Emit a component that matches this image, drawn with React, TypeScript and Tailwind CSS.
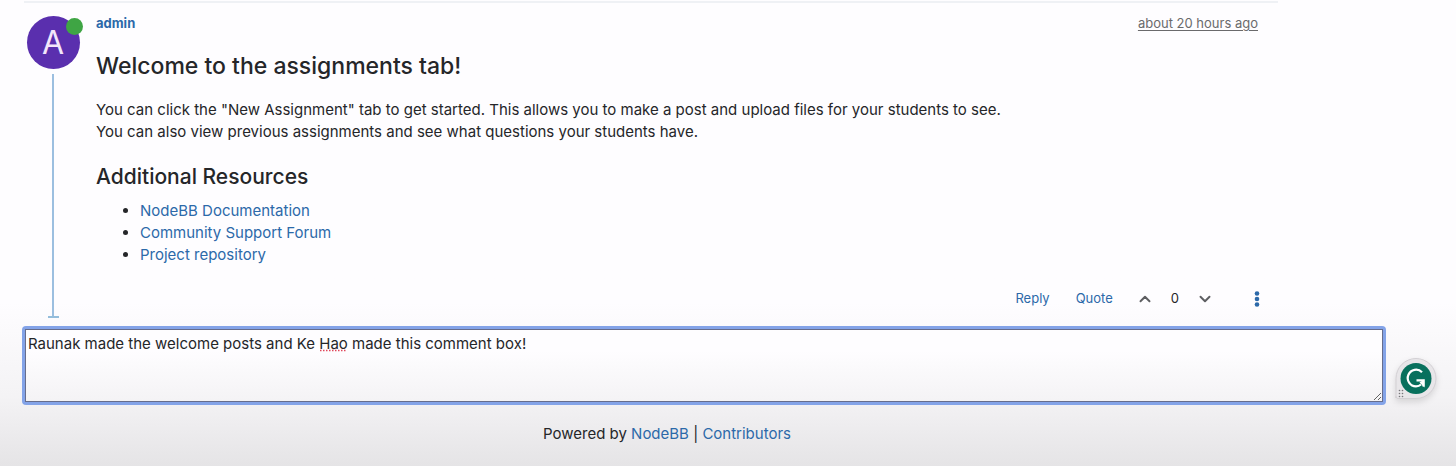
import { useState } from "react";
import { ChevronDown, ChevronUp } from "lucide-react";

const resources = ["NodeBB Documentation", "Community Support Forum", "Project repository"];

function Avatar() {
  return (
    <div className="relative flex size-[53px] items-center justify-center rounded-full bg-[#5a2fae] text-[32px] leading-none text-[#f3e6fb]">
      A
      <span className="absolute -right-[3px] top-0.5 size-[17px] rounded-full bg-[#3fa544]" />
    </div>
  );
}

function Post() {
  return (
    <article className="mr-[178px] ml-6 flex border-t-2 border-[#eff1f5]">
      <div className="flex w-[58px] shrink-0 flex-col items-center pt-[13px]">
        <Avatar />
        <div className="mt-[5px] w-0.5 grow bg-[#9cbfe0]" />
        <div className="h-0.5 w-[11px] bg-[#94bddb]" />
      </div>
      <div className="grow pt-2.5 pb-[3px] pl-[14px]">
        <header className="flex items-center justify-between pr-5 text-[13px] leading-5">
          <a href="#admin" className="font-bold text-[#2c69a9]">admin</a>
          <a href="#post" className="text-[#6a6a6c] underline underline-offset-2">about 20 hours ago</a>
        </header>
        <h2 className="mt-[17px] text-[23px] leading-8 font-medium">Welcome to the assignments tab!</h2>
        <p className="mt-[17px] text-[15px] leading-[22px]">
          You can click the "New Assignment" tab to get started. This allows you to make a post and upload files for your students to see.
          <br />
          You can also view previous assignments and see what questions your students have.
        </p>
        <h3 className="mt-5 text-[21px] leading-7 font-medium">Additional Resources</h3>
        <ul className="mt-[9px] list-disc pl-11 text-[15px] leading-[22px]">
          {resources.map((name) => (
            <li key={name}>
              <a href="#resource" className="text-[#2c69a9]">{name}</a>
            </li>
          ))}
        </ul>
        <div className="mt-[17px] flex h-8 items-center justify-end pr-[18px] text-[13px] text-[#2c69a9]">
          <button type="button">Reply</button>
          <button type="button" className="ml-[26px]">Quote</button>
          <button type="button" aria-label="Upvote" className="ml-[23px] text-[#5e5f62]">
            <ChevronUp size={18} strokeWidth={2.6} />
          </button>
          <span className="mx-[17px] text-[#252629]">0</span>
          <button type="button" aria-label="Downvote" className="text-[#5e5f62]">
            <ChevronDown size={18} strokeWidth={2.6} />
          </button>
          <button type="button" aria-label="More options" className="ml-10">
            <svg width="6" height="16" viewBox="0 0 6 16" fill="currentColor">
              <circle cx="3" cy="2.5" r="2.3" />
              <circle cx="3" cy="8" r="2.3" />
              <circle cx="3" cy="13.5" r="2.3" />
            </svg>
          </button>
        </div>
      </div>
    </article>
  );
}

function WritingAssistant() {
  return (
    <button type="button" aria-label="Writing assistant" className="mt-8 shrink-0">
      <svg width="42" height="42" viewBox="0 0 42 42" className="drop-shadow-md">
        <path d="M1 40V20.500A20 20 0 1 1 21 40.500H3Q1 40.500 1 38.500Z" fill="#e8e6e9" stroke="#d2cfd3" />
        <circle cx="21" cy="20.500" r="15.500" fill="#08705d" />
        <path d="M27 14.200A8.300 8.300 0 1 0 21 28.300Q24 28.300 26 26.500M21.500 22.300H28.500V28.500" fill="none" stroke="#fff" strokeWidth="2.200" />
        <path d="M29.500 21.300V29.500L26.500 26.500L24.500 24.500Z" fill="#fff" />
        <g fill="#77777a">
          <circle cx="4.500" cy="32.500" r=".8" /><circle cx="7.500" cy="32.500" r=".8" />
          <circle cx="4.500" cy="35.500" r=".8" /><circle cx="7.500" cy="35.500" r=".8" />
          <circle cx="4.500" cy="38.500" r=".8" /><circle cx="7.500" cy="38.500" r=".8" />
        </g>
      </svg>
    </button>
  );
}

export default function App() {
  const [comment, setComment] = useState("Raunak made the welcome posts and Ke Hao made this comment box!");
  return (
    <div className="flex min-h-screen flex-col bg-linear-to-b from-[#fefdff] from-65% via-[#f4f3f5] via-85% to-[#e5e4e6] pt-px font-[Inter,sans-serif] text-[#252629]">
      <Post />
      <div className="mt-2 flex items-start gap-[9px] pr-[19px] pl-[22px]">
        <div className="relative grow rounded-[4px] bg-[#83a3e8] p-[3px]">
          <textarea
            aria-label="Comment"
            spellCheck={false}
            value={comment}
            onChange={(e) => setComment(e.target.value)}
            className="block h-[73px] w-full resize border border-[#666d8c] bg-linear-to-b from-[#fefdff] from-30% to-[#f4f3f5] px-0.5 py-[3px] text-[15px] leading-[22px] outline-none"
          />
          <svg className="absolute top-[23px] left-[297px]" width="27" height="3" aria-hidden="true">
            <path d="M1 1.500H27" stroke="#e0475b" strokeWidth="1.500" strokeDasharray="1.500 1.500" />
          </svg>
        </div>
        <WritingAssistant />
      </div>
      <footer className="mt-[18px] pr-[122px] text-center text-[15px] leading-[22px]">
        Powered by <a href="#nodebb" className="text-[#2c69a9]">NodeBB</a> | <a href="#contributors" className="text-[#2c69a9]">Contributors</a>
      </footer>
    </div>
  );
}
